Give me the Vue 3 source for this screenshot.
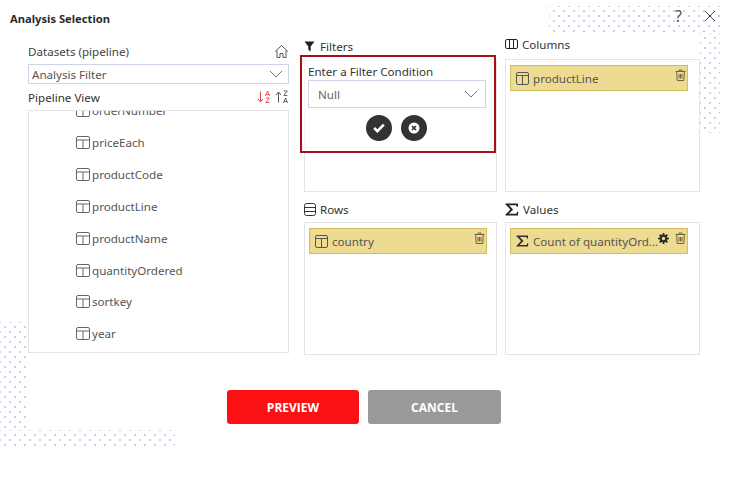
<script setup>
const fields = ['orderNumber', 'priceEach', 'productCode', 'productLine', 'productName', 'quantityOrdered', 'sortkey', 'year']
</script>

<template>
  <div class="page">
    <div class="dots dots-top"></div>
    <div class="dots dots-right"></div>
    <div class="dots dots-left"></div>
    <div class="dots dots-bottom"></div>

    <header class="head">
      <span class="title">Analysis Selection</span>
      <span class="help">?</span>
      <svg class="close" width="12" height="12" viewBox="0 0 12 12"><path d="M1 1l10 10M11 1L1 11" stroke="#444" fill="none" /></svg>
    </header>

    <main class="body">
      <section class="left">
        <div class="row-label">
          <span>Datasets (pipeline)</span>
          <svg width="15" height="15" viewBox="0 0 15 15" fill="none" stroke="#555"><path d="M1.200 7.500L7.500 1.500l6.300 6M3 6.500V13.500h3V9.500h3v4h3V6.500" /></svg>
        </div>
        <div class="select dataset">
          <span>Analysis Filter</span>
          <svg width="14" height="8" viewBox="0 0 14 8" fill="none" stroke="#777"><path d="M1 1l6 6 6-6" /></svg>
        </div>
        <div class="row-label view">
          <span>Pipeline View</span>
          <span class="sorts">
            <svg width="14" height="14" viewBox="0 0 14 14" fill="none" stroke="#e8434a"><path d="M3.500 1.500v10M1 9l2.500 3L6 9" /><path d="M8.500 6l2-5 2 5M9.200 4.500h2.600M8.800 8h3.500l-3.500 4.500h3.500" stroke-width=".9" /></svg>
            <svg width="14" height="14" viewBox="0 0 14 14" fill="none" stroke="#555"><path d="M3.500 12.500v-10M1 5l2.500-3L6 5" /><path d="M8.800 1h3.500L8.800 5.500h3.500M8.500 13l2-5 2 5M9.200 11.500h2.600" stroke-width=".9" /></svg>
          </span>
        </div>
        <div class="tree">
          <ul class="tree-list">
            <li v-for="f in fields" :key="f">
              <svg class="tbl" width="14" height="13" viewBox="0 0 14 13" fill="none" stroke="#666"><rect x=".5" y=".5" width="13" height="12" rx="1.500" /><path d="M.5 4h13M7 4v8.500" /></svg>
              {{ f }}
            </li>
          </ul>
        </div>
      </section>

      <section class="zones">
        <div class="zone">
          <div class="zone-label wide">
            <svg width="11" height="11" viewBox="0 0 11 11"><path d="M.5 .5h10L6.700 5.500V10.500L4.300 8.800V5.500z" fill="#222" /></svg>
            Filters
          </div>
          <div class="drop"></div>
        </div>
        <div class="zone">
          <div class="zone-label raised">
            <svg width="13" height="11" viewBox="0 0 13 11" fill="none" stroke="#222"><rect x=".5" y=".5" width="12" height="9" rx="1.500" /><path d="M4.500 .5v9M8.500 .5v9" /></svg>
            Columns
          </div>
          <div class="drop right">
            <div class="chip">
              <svg class="tbl" width="13" height="13" viewBox="0 0 13 13" fill="none" stroke="#555"><rect x=".5" y=".5" width="12" height="12" rx="1.500" /><path d="M.5 3.500h12M6.500 3.500v9" /></svg>
              <span class="chip-text">productLine</span>
              <svg class="bin" width="11" height="12" viewBox="0 0 11 12" fill="none" stroke="#6d6540"><path d="M.5 2.500h10M4 2.500V1h3v1.500M1.700 2.500l.5 9h6.600l.5-9M4 5v4.500M5.500 5v4.500M7 5v4.500" /></svg>
            </div>
          </div>
        </div>
        <div class="zone">
          <div class="zone-label">
            <svg width="12" height="13" viewBox="0 0 12 13" fill="none" stroke="#333"><rect x=".5" y=".5" width="11" height="12" rx="2" /><path d="M.5 4.500h11M.5 8.500h11" /></svg>
            Rows
          </div>
          <div class="drop">
            <div class="chip">
              <svg class="tbl" width="13" height="13" viewBox="0 0 13 13" fill="none" stroke="#555"><rect x=".5" y=".5" width="12" height="12" rx="1.500" /><path d="M.5 3.500h12M6.500 3.500v9" /></svg>
              <span class="chip-text">country</span>
              <svg class="bin" width="11" height="12" viewBox="0 0 11 12" fill="none" stroke="#6d6540"><path d="M.5 2.500h10M4 2.500V1h3v1.500M1.700 2.500l.5 9h6.600l.5-9M4 5v4.500M5.500 5v4.500M7 5v4.500" /></svg>
            </div>
          </div>
        </div>
        <div class="zone">
          <div class="zone-label">
            <svg width="14" height="13" viewBox="0 0 13 12"><path d="M.5 .5h11.500v3h-1L10.300 2H3.700L7.500 6 3.500 10h7l.8-1.800h1L12 11.500H.5v-.8L5 6 .5 1.300z" fill="#222" /></svg>
            Values
          </div>
          <div class="drop right">
            <div class="chip">
              <svg class="tbl" width="13" height="12" viewBox="0 0 13 12"><path d="M.5 .5h11.500v3h-1L10.300 2H3.700L7.500 6 3.500 10h7l.8-1.800h1L12 11.500H.5v-.8L5 6 .5 1.300z" fill="#333" /></svg>
              <span class="chip-text">Count of quantityOrd...</span>
              <svg class="gear" width="11" height="11" viewBox="0 0 11 11"><circle cx="5.500" cy="5.500" r="2.800" fill="none" stroke="#2a2a2a" stroke-width="2.200" /><path d="M5.500 0v11M0 5.500h11M1.600 1.600l7.800 7.800M9.400 1.600l-7.800 7.800" stroke="#2a2a2a" stroke-width="1.700" stroke-dasharray="2 7 2" /></svg>
              <svg class="bin" width="11" height="12" viewBox="0 0 11 12" fill="none" stroke="#6d6540"><path d="M.5 2.500h10M4 2.500V1h3v1.500M1.700 2.500l.5 9h6.600l.5-9M4 5v4.500M5.500 5v4.500M7 5v4.500" /></svg>
            </div>
          </div>
        </div>

        <div class="popup">
          <div class="popup-title">Enter a Filter Condition</div>
          <div class="select cond">
            <span>Null</span>
            <svg width="14" height="8" viewBox="0 0 14 8" fill="none" stroke="#777"><path d="M1 1l6 6 6-6" /></svg>
          </div>
          <div class="popup-actions">
            <button class="round">
              <svg width="12" height="10" viewBox="0 0 12 10" fill="none" stroke="#fff" stroke-width="2.600"><path d="M1.200 5l3.200 3.200 6.400-6.600" /></svg>
            </button>
            <button class="round">
              <svg width="12" height="12" viewBox="0 0 12 12"><circle cx="6" cy="6" r="5.500" fill="#fff" /><path d="M4 4l4 4M8 4l-4 4" stroke="#333" stroke-width="1.700" /></svg>
            </button>
          </div>
        </div>
      </section>
    </main>

    <footer class="foot">
      <button class="btn preview">PREVIEW</button>
      <button class="btn cancel">CANCEL</button>
    </footer>
  </div>
</template>

<style>
html, body { margin: 0; background: #fff; }
</style>

<style scoped>
.page {
  position: relative;
  width: 743px;
  height: 487px;
  overflow: hidden;
  background: #fff;
  font-family: "Noto Sans", "Open Sans", sans-serif;
  font-size: 11.6px;
  color: #333;
}
.dots {
  position: absolute;
  background-image:
    radial-gradient(circle, #ccd1ea 0.9px, transparent 1.1px),
    radial-gradient(circle, #ccd1ea 0.9px, transparent 1.1px);
  background-size: 10px 10px;
  background-position: 0 0, 5px 5px;
}
.dots-top { left: 549px; top: 6px; width: 171px; height: 27px; }
.dots-right { left: 700px; top: 33px; width: 20px; height: 100px; }
.dots-left { left: 0; top: 322px; width: 28px; height: 108px; }
.dots-bottom { left: 0; top: 430px; width: 175px; height: 17px; }

.head {
  position: relative;
  height: 38px;
  display: flex;
  align-items: center;
  padding: 0 27px 2px 10px;
  box-sizing: border-box;
}
.title { font-size: 11.200px; font-weight: 700; color: #2b2b2b; flex: 1; }
.help { font-size: 16px; color: #555; margin-right: 22px; margin-top: -4px; }
.close { margin-top: -4px; }

.body {
  position: relative;
  display: flex;
  padding-left: 28px;
}
.left { width: 261px; margin-right: 15px; }
.row-label {
  display: flex;
  align-items: center;
  justify-content: space-between;
  height: 26px;
  color: #444;
}
.select {
  display: flex;
  align-items: center;
  justify-content: space-between;
  box-sizing: border-box;
  border: 1px solid #cfd3e6;
  background: #fff;
  color: #555;
}
.dataset { height: 20px; padding: 0 5px 0 3px; }
.view { height: 26px; color: #333; }
.sorts { display: flex; gap: 4px; }
.tree {
  height: 243px;
  box-sizing: border-box;
  border: 1px solid #e4e4e4;
  overflow: hidden;
  background: #fff;
}
.tree-list {
  list-style: none;
  margin: -16px 0 0;
  padding: 0 0 0 47px;
  color: #555;
}
.tree-list li {
  height: 31.850px;
  display: flex;
  align-items: center;
  gap: 2px;
}

.zones {
  position: relative;
  display: grid;
  grid-template-columns: 193px 195px;
  column-gap: 8px;
  row-gap: 4px;
  margin-top: -5px;
}
.zone-label {
  display: flex;
  align-items: center;
  gap: 4px;
  height: 26px;
  color: #333;
  box-sizing: border-box;
}
.zone-label.wide { gap: 5px; }
.zone-label.raised { padding-bottom: 3px; }
.drop {
  box-sizing: border-box;
  height: 133px;
  border: 1px solid #e4e4e4;
  padding: 5px 9px 0 4px;
  background: #fff;
}
.drop.right { padding-right: 11px; }
.chip {
  display: flex;
  align-items: center;
  height: 26px;
  box-sizing: border-box;
  padding: 0 1px 0 5px;
  background: #eddb91;
  border: 1px solid #d6bc5e;
  color: #555;
}
.tbl { flex-shrink: 0; }
.chip-text { flex: 1; min-width: 0; margin-left: 4px; white-space: nowrap; }
.chip .bin { margin-top: -6px; flex-shrink: 0; }
.chip .gear { margin-top: -6px; margin-right: 6px; flex-shrink: 0; }

.popup {
  position: absolute;
  left: -4px;
  top: 22px;
  width: 196px;
  height: 98px;
  box-sizing: border-box;
  border: 2px solid #a70f16;
  background: #fff;
  padding: 7px 8px 0 6px;
  box-shadow: inset 0 0 0 2px #fff, inset 0 0 3px 2px #e8e8e8;
}
.popup-title { color: #333; line-height: 15px; }
.cond { height: 28px; margin-top: 1px; padding: 0 7px 0 9px; color: #666; }
.popup-actions {
  display: flex;
  justify-content: center;
  gap: 9px;
  margin-top: 7px;
  padding-right: 2px;
}
.round {
  width: 26px;
  height: 26px;
  padding: 0;
  border: none;
  border-radius: 50%;
  background: #333;
  display: flex;
  align-items: center;
  justify-content: center;
}

.foot {
  position: relative;
  display: flex;
  gap: 9px;
  padding-left: 227px;
  margin-top: 35px;
}
.btn {
  height: 34px;
  border: none;
  border-radius: 3px;
  color: #fff;
  font-family: "Open Sans", "Noto Sans", sans-serif;
  font-size: 12px;
  font-weight: 700;
}
.preview { width: 132px; background: #fb1014; }
.cancel { width: 133px; background: #999; }
</style>
